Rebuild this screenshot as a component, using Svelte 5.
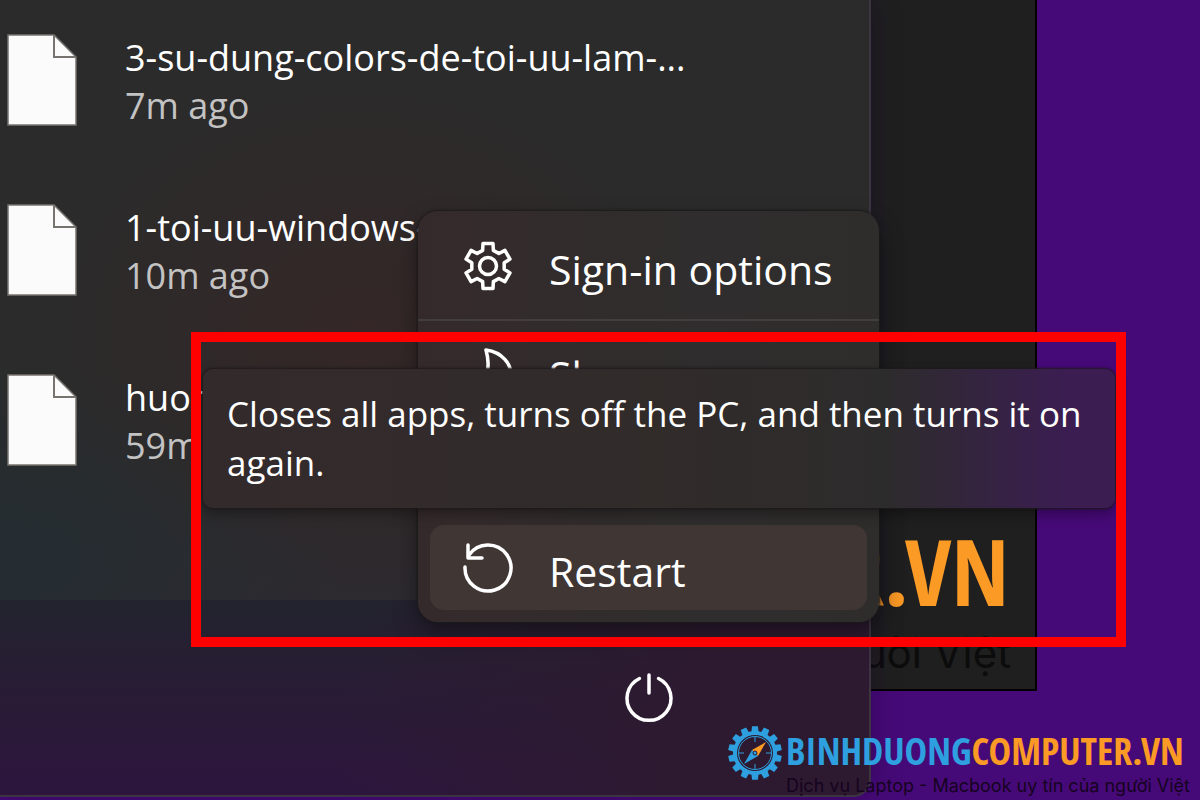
<script>
	const files = [
		{ name: '3-su-dung-colors-de-toi-uu-lam-...', time: '7m ago' },
		{ name: '1-toi-uu-windows-', time: '10m ago' },
		{ name: 'huong', time: '59m ago' }
	]

	// outline of a gear: each tooth is four points around the centre
	function gear(teeth, root, tip, rootHalf, tipHalf) {
		const points = []
		for (let i = 0; i < teeth; i++) {
			const mid = (i / teeth) * Math.PI * 2 - Math.PI / 2
			for (const [r, a] of [[root, -rootHalf], [tip, -tipHalf], [tip, tipHalf], [root, rootHalf]]) {
				points.push(`${(r * Math.cos(mid + a)).toFixed(2)} ${(r * Math.sin(mid + a)).toFixed(2)}`)
			}
		}
		return 'M' + points.join('L') + 'Z'
	}

	const settingsGear = gear(6, 16.5, 23, 0.33, 0.22)
	const logoGear = gear(14, 22, 27, 0.16, 0.11)
</script>

<div class="desktop">
	<div class="window">
		<div class="big-name">R.VN</div>
		<div class="big-tagline">người Việt</div>
	</div>

	<main class="start">
		<ul class="files">
			{#each files as file}
				<li>
					<svg class="file-icon" viewBox="0 0 70 92" aria-hidden="true">
						<path d="M1 1H47L69 23V91H1Z" fill="#fbfbfb" stroke="#77736f" stroke-width="1.5" />
						<path d="M47 1V23H69" fill="none" stroke="#77736f" stroke-width="2" />
					</svg>
					<div>
						<div class="name">{file.name}</div>
						<div class="time">{file.time}</div>
					</div>
				</li>
			{/each}
		</ul>

		<footer>
			<button class="power" aria-label="Power">
				<svg viewBox="-26 -26 52 52">
					<path d="M-9.500-19.500A22 22 0 1 0 9.500-19.500M0-23V-5" />
				</svg>
			</button>
		</footer>

		<div class="menu" role="menu">
			<button role="menuitem">
				<svg viewBox="-26 -26 52 52">
					<path d={settingsGear} />
					<circle r="8.500" />
				</svg>
				<span>Sign-in options</span>
			</button>
			<hr />
			<button role="menuitem">
				<svg viewBox="-26 -26 52 52">
					<path d="M-2-22C14-20 24-8 23 5C20 19 0 26-15 15C-1 9 3-4-2-22Z" />
				</svg>
				<span>Sleep</span>
			</button>
			<button role="menuitem">
				<svg viewBox="-26 -26 52 52">
					<path d="M-9.500-19.500A22 22 0 1 0 9.500-19.500M0-23V-5" />
				</svg>
				<span>Shut down</span>
			</button>
			<button role="menuitem" class="active">
				<svg viewBox="-26 -26 52 52">
					<path d="M-23-1A23 23 0 1 0-19-13M-20-23V-10H-6" />
				</svg>
				<span>Restart</span>
			</button>
		</div>

		<div class="tooltip" role="tooltip">Closes all apps, turns off the PC, and then turns it on again.</div>
		<div class="highlight"></div>
	</main>

	<div class="brand">
		<svg viewBox="-28 -28 56 56" aria-hidden="true">
			<path d="{logoGear}M18 0A18 18 0 1 0-18 0A18 18 0 1 0 18 0Z" fill="#2e9fdf" fill-rule="evenodd" />
			<circle r="16.500" fill="none" stroke="#2e9fdf" />
			<path d="M0-16V-11M0 11V16M-16 0H-11M11 0H16" stroke="#2e9fdf" />
			<path d="M11-11L3 3L-3-3Z" fill="#fb9a25" />
			<path d="M-11 11L3 3L-3-3Z" fill="#2e9fdf" />
			<circle r="2" fill="#2e9fdf" stroke="#2c1a35" />
		</svg>
		<div>
			<div class="brand-name"><span>BINHDUONG</span>COMPUTER.VN</div>
			<div class="tagline">Dịch vụ Laptop - Macbook uy tín của người Việt</div>
		</div>
	</div>
</div>

<style>
	:global(body) {
		margin: 0;
	}

	.desktop {
		position: relative;
		min-height: 100vh;
		overflow: hidden;
		background: #460a78;
		font-family: "Open Sans", "Noto Sans", sans-serif;
		color: #fff;
	}

	/* window behind the start menu */
	.window {
		position: absolute;
		top: 0;
		right: 163px;
		width: 600px;
		height: 689px;
		border: solid #000;
		border-width: 0 2px 2px 0;
		background: #1f1f1f;
		display: flex;
		flex-direction: column;
		justify-content: flex-end;
		align-items: flex-end;
	}

	.big-name {
		margin-right: 26px;
		font: bold 92px/104px "Open Sans Condensed", "Open Sans", sans-serif;
		color: #fb9a25;
	}

	.big-tagline {
		margin: 0 24px 6px 0;
		font: 42px/60px Inter, sans-serif;
		color: #0c0c0c;
		white-space: nowrap;
	}

	.start {
		position: relative;
		box-sizing: border-box;
		width: 871px;
		min-height: calc(100vh - 3px);
		display: flex;
		flex-direction: column;
		border: solid #3c3440;
		border-width: 0 2px 2px 0;
		border-bottom-right-radius: 18px;
		background:
			radial-gradient(ellipse 320px 260px at 360px 330px, #352727, transparent),
			radial-gradient(ellipse 340px 200px at 0 560px, #242d32, transparent),
			linear-gradient(#2b2b2b 60%, #2d2a30 75%);
		box-shadow: 0 0 30px #1a053066;
	}

	.files {
		flex: 1;
		margin: 0;
		padding: 34px 0 0 7px;
		list-style: none;
		display: flex;
		flex-direction: column;
		gap: 72px;
	}

	.files li {
		display: flex;
		align-items: flex-start;
		gap: 48px;
		font-size: 36px;
		line-height: 48px;
		white-space: nowrap;
	}

	.file-icon {
		width: 70px;
		height: 92px;
		margin-bottom: 6px;
	}

	.time {
		color: #c4c3c3;
	}

	footer {
		height: 195px;
		display: flex;
		justify-content: flex-end;
		align-items: center;
		padding-right: 194px;
		box-sizing: border-box;
		border-bottom-right-radius: 16px;
		background: linear-gradient(100deg, transparent 40%, #2d1a30 80%), linear-gradient(#22232e, #291c36 50%, #2d153e);
	}

	button {
		border: 0;
		background: none;
		color: inherit;
		font: inherit;
	}

	svg {
		flex: none;
		display: block;
	}

	button svg {
		width: 52px;
		height: 52px;
		fill: none;
		stroke: #fff;
		stroke-width: 3.5;
		stroke-linecap: round;
		stroke-linejoin: round;
	}

	.power {
		padding: 12px;
		margin-right: -12px;
	}

	.menu {
		position: absolute;
		top: 211px;
		left: 418px;
		width: 461px;
		box-sizing: border-box;
		padding: 12px;
		border-radius: 20px;
		background: linear-gradient(90deg, #352a2b, #2f2d2d 60%, #2e2d2c);
		box-shadow: 0 0 2px 1px #1c1a1a, 0 12px 24px #00000066;
	}

	.menu button {
		display: flex;
		align-items: center;
		gap: 35px;
		width: 100%;
		height: 85px;
		padding: 0 32px;
		border-radius: 14px;
		font-size: 41px;
		white-space: nowrap;
	}

	.menu button span {
		padding-top: 6px;
	}

	.menu button + button {
		margin-top: 13px;
	}

	.menu hr {
		height: 2px;
		margin: 11px -12px 8px;
		border: 0;
		background: #423e3e;
	}

	.menu .active {
		background: #403634;
	}

	.tooltip {
		position: absolute;
		top: 369px;
		left: 203px;
		width: 912px;
		box-sizing: border-box;
		padding: 20px 20px 21px 24px;
		border-radius: 10px;
		background: linear-gradient(90deg, #332a2c, #312b2a 50%, #2d2c2c 75%, #3b1d52 95%);
		box-shadow: 0 0 2px 1px #1f1a1d, 0 6px 14px #00000055;
		font-size: 35px;
		line-height: 49px;
	}

	.highlight {
		position: absolute;
		top: 332px;
		left: 191px;
		width: 915px;
		height: 295px;
		border: 10px solid #f00;
		pointer-events: none;
	}

	/* watermark in the corner */
	.brand {
		position: absolute;
		right: 10px;
		bottom: 3px;
		display: flex;
		align-items: flex-start;
		gap: 3px;
	}

	.brand svg {
		width: 56px;
		height: 56px;
	}

	.brand-name {
		font: bold 38px/50px "Open Sans Condensed", "Open Sans", sans-serif;
		color: #fb9a25;
	}

	.brand-name span {
		color: #2e9fdf;
	}

	.tagline {
		font: 18px/22px Inter, sans-serif;
		color: #150320;
		white-space: nowrap;
	}
</style>
